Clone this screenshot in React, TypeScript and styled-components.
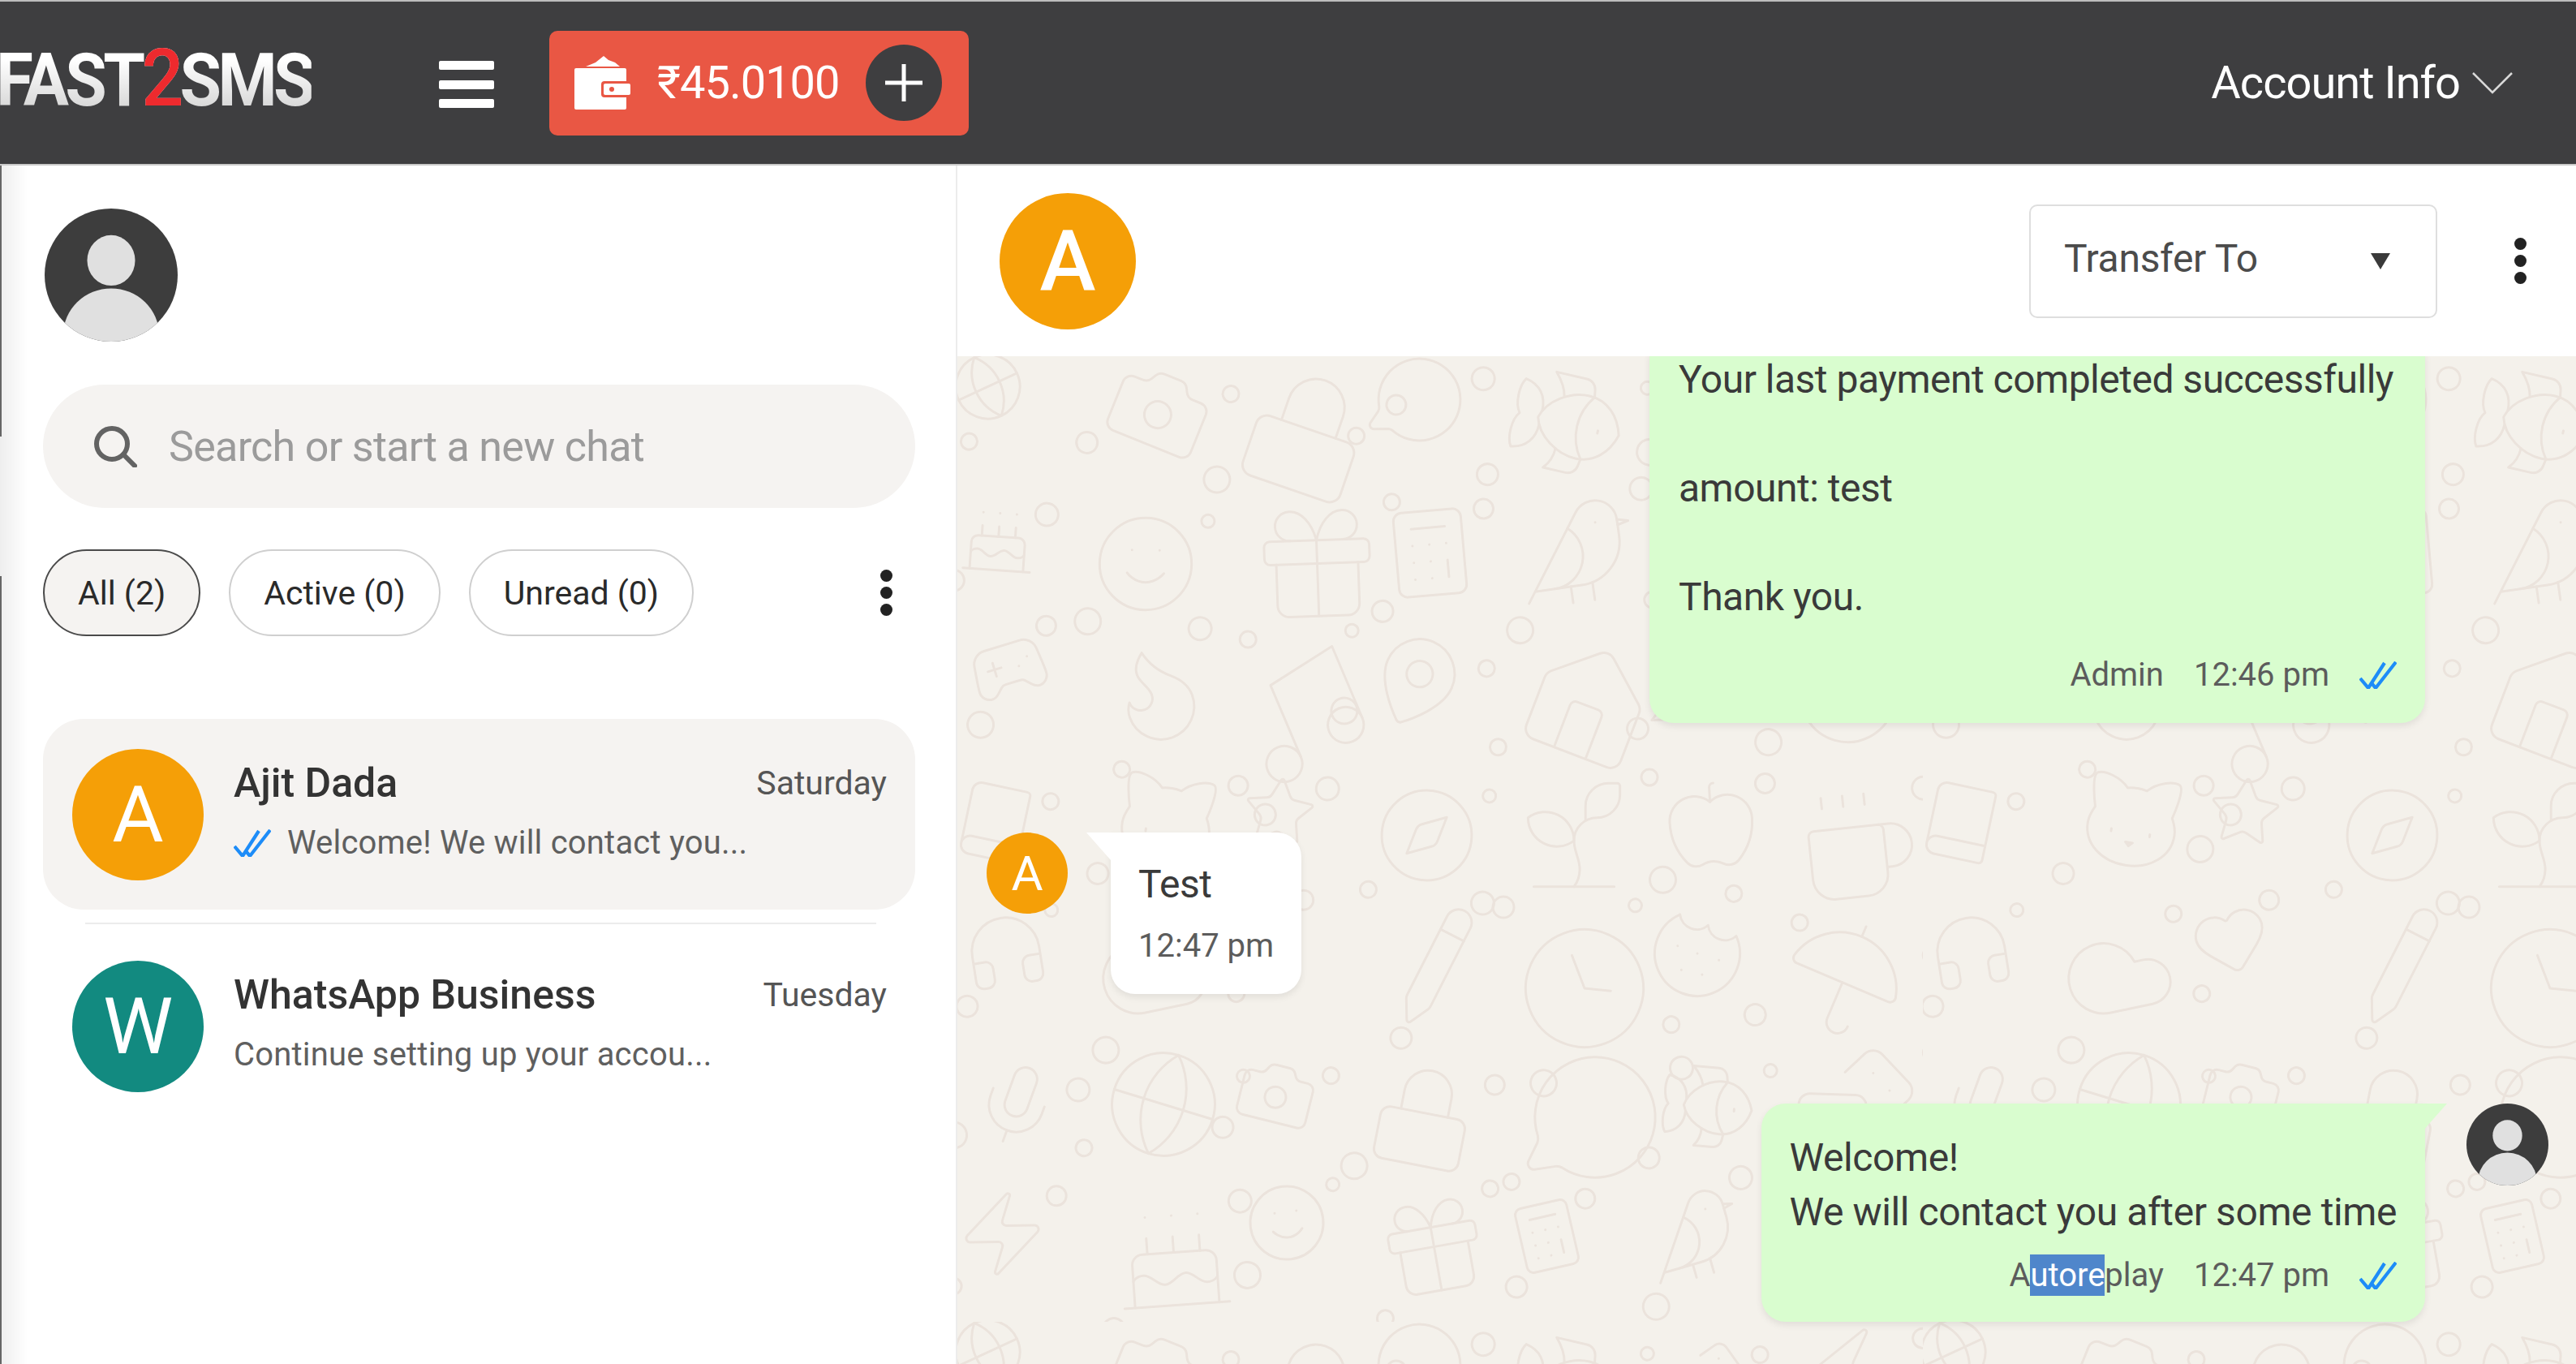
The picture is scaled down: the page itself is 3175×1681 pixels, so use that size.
import React from "react";
import styled, { createGlobalStyle } from "styled-components";
import {
  Apple, Bird, Book, Cake, Calculator, Camera, Carrot, Cat, Clock, Cloud, Coffee, Compass, Cookie,
  Dices, Fish, Flame, Gamepad2, Gift, Globe, Headphones, Heart, House, Lock, MapPin, MessageCircle,
  Mic, Moon, Music, Pencil, Puzzle, Smile, Sparkles, Sprout, Star, Umbrella, Zap,
} from "lucide-react";

const GlobalStyle = createGlobalStyle`
  html, body { margin: 0; padding: 0; background: #fff; }
  * { box-sizing: border-box; }
  body { font-family: Roboto, "Liberation Sans", sans-serif; color: #3c3c3c; }
`;

const Page = styled.div`
  width: 3175px;
  height: 1681px;
  display: flex;
  flex-direction: column;
  overflow: hidden;
`;

const TopBar = styled.header`
  height: 204px;
  flex: none;
  display: flex;
  align-items: center;
  background: #3e3e40;
  border-top: 2px solid #bdbdbd;
  border-bottom: 2px solid #c9c9c9;
  padding-right: 78px;
`;

const LogoSlot = styled.div`
  width: 541px;
  flex: none;
`;

const Logo = styled.div`
  display: inline-block;
  margin-left: -5px;
  margin-top: -12px;
  font-size: 90px;
  font-weight: 700;
  letter-spacing: -5px;
  transform: scaleX(0.93);
  transform-origin: left center;
  background: linear-gradient(#ffffff 30%, #d5d5d5 85%);
  -webkit-background-clip: text;
  background-clip: text;
  color: transparent;
  span { color: #ee2a2e; font-weight: 500; font-size: 98px; -webkit-text-fill-color: #ee2a2e; }
`;

const Burger = styled.div`
  width: 68px;
  height: 58px;
  margin-right: 68px;
  display: flex;
  flex-direction: column;
  justify-content: space-between;
  margin-top: 4px;
  i { display: block; height: 11px; border-radius: 2px; background: #fff; }
`;

const Wallet = styled.div`
  width: 517px;
  height: 129px;
  display: flex;
  align-items: center;
  padding: 0 33px 0 31px;
  border-radius: 10px;
  background: #e95744;
  color: #fff;
  font-size: 56px;
  svg { flex: none; }
`;

const Balance = styled.span`
  margin-left: 33px;
  flex: 1;
  letter-spacing: -1px;
`;

const PlusBtn = styled.div`
  width: 94px;
  height: 94px;
  border-radius: 50%;
  background: #3e3e40;
  display: flex;
  align-items: center;
  justify-content: center;
`;

const Account = styled.div`
  margin-left: auto;
  display: flex;
  align-items: center;
  gap: 15px;
  color: #fff;
  font-size: 56px;
  letter-spacing: -1px;
`;

const Body = styled.div`
  flex: 1;
  min-height: 0;
  display: flex;
`;

const Sidebar = styled.aside`
  width: 1180px;
  flex: none;
  padding: 53px 50px 0 53px;
  border-right: 2px solid #ececec;
  background:
    linear-gradient(#666 0, #666 334px, transparent 334px, transparent 506px, #666 506px) left top / 2px 100% no-repeat,
    linear-gradient(90deg, #eeeeee 0, #ffffff 34px);
`;

const Me = styled.div`
  margin-left: 2px;
  height: 166px;
`;

const Search = styled.div`
  margin-top: 51px;
  height: 152px;
  border-radius: 76px;
  background: #f5f3f1;
  display: flex;
  align-items: center;
  gap: 39px;
  padding-left: 62px;
  font-size: 52px;
  letter-spacing: -0.7px;
  color: #9b9b9b;
`;

const Filters = styled.div`
  margin-top: 51px;
  display: flex;
  align-items: center;
  gap: 35px;
  height: 107px;
`;

const Chip = styled.div<{ $active?: boolean }>`
  height: 107px;
  padding: 0 41px;
  border-radius: 54px;
  display: flex;
  align-items: center;
  font-size: 41px;
  color: #2a2a2a;
  background: ${(p) => (p.$active ? "#f5f3f1" : "#fff")};
  border: 2px solid ${(p) => (p.$active ? "#4a4a4a" : "#cfcfcf")};
`;

const Kebab = styled.div<{ $size: number }>`
  display: flex;
  flex-direction: column;
  gap: ${(p) => p.$size * 0.4}px;
  i {
    display: block;
    width: ${(p) => p.$size}px;
    height: ${(p) => p.$size}px;
    border-radius: 50%;
    background: #222;
  }
`;

const FilterKebab = styled(Kebab)`
  margin-left: auto;
  margin-right: 28px;
`;

const ChatList = styled.div`
  margin-top: 102px;
`;

const ChatItem = styled.div<{ $active?: boolean }>`
  height: 235px;
  padding: 0 35px 0 36px;
  border-radius: 50px;
  display: flex;
  align-items: center;
  gap: 37px;
  background: ${(p) => (p.$active ? "#f5f3f1" : "#fff")};
`;

const Divider = styled.div`
  height: 2px;
  margin: 16px 48px 8px 52px;
  background: #ececec;
`;

const Avatar = styled.div<{ $size: number; $bg: string }>`
  flex: none;
  width: ${(p) => p.$size}px;
  height: ${(p) => p.$size}px;
  border-radius: 50%;
  background: ${(p) => p.$bg};
  color: #fff;
  font-size: ${(p) => p.$size * 0.6}px;
  display: flex;
  align-items: center;
  justify-content: center;
`;

const HeaderAvatar = styled(Avatar)`
  font-size: 104px;
  font-weight: 500;
`;

const ChatBody = styled.div`
  flex: 1;
  min-width: 0;
  padding-bottom: 6px;
`;

const ChatTop = styled.div`
  display: flex;
  justify-content: space-between;
  align-items: center;
  margin-bottom: 21px;
`;

const ChatName = styled.div`
  font-size: 50px;
  font-weight: 500;
  color: #333;
  line-height: 56px;
`;

const ChatDay = styled.div`
  font-size: 41px;
  color: #555;
`;

const ChatPreview = styled.div`
  display: flex;
  align-items: center;
  gap: 20px;
  font-size: 40px;
  letter-spacing: 0.2px;
  line-height: 50px;
  color: #5f5f5f;
`;

const Conversation = styled.main`
  flex: 1;
  min-width: 0;
  display: flex;
  flex-direction: column;
`;

const ConvHeader = styled.div`
  height: 235px;
  flex: none;
  display: flex;
  align-items: center;
  padding: 0 61px 0 52px;
  background: #fff;
`;

const Transfer = styled.div`
  margin-left: auto;
  margin-right: 95px;
  width: 503px;
  height: 140px;
  padding: 0 56px 6px 41px;
  border: 2px solid #dedede;
  border-radius: 10px;
  display: flex;
  align-items: center;
  justify-content: space-between;
  font-size: 48px;
  letter-spacing: -0.3px;
  color: #4b4b4b;
  svg { margin-top: 6px; }
`;

const Messages = styled.div`
  flex: 1;
  min-height: 0;
  position: relative;
  overflow: hidden;
  background: #f4f1eb;
  display: flex;
  flex-direction: column;
  justify-content: flex-end;
  gap: 135px;
  padding-bottom: 52px;
`;

const Doodles = styled.svg`
  position: absolute;
  inset: 0;
  width: 100%;
  height: 100%;
`;

const Row = styled.div<{ $out?: boolean }>`
  position: relative;
  display: flex;
  align-items: flex-start;
  justify-content: ${(p) => (p.$out ? "flex-end" : "flex-start")};
  gap: 53px;
  padding: ${(p) => (p.$out ? "0 34px 0 0" : "0 0 0 36px")};
`;

const Bubble = styled.div<{ $out?: boolean; $clipped?: boolean }>`
  position: relative;
  padding: ${(p) => (p.$out ? "33px 35px 32px 34px" : "30px 34px 34px")};
  margin-right: ${(p) => (p.$out ? "152px" : "0")};
  background: ${(p) => (p.$out ? "#d9fdcf" : "#fff")};
  border-radius: ${(p) => (p.$clipped ? "0 0 30px 30px" : p.$out ? "30px 0 30px 30px" : "0 30px 30px 30px")};
  box-shadow: 0 4px 8px rgba(0, 0, 0, 0.08);
  font-size: 48px;
  letter-spacing: -0.4px;
  line-height: 67px;
  color: #3a3a3a;
  &::before {
    content: ${(p) => (p.$clipped ? "none" : '""')};
    position: absolute;
    top: 0;
    ${(p) => (p.$out ? "right: -27px;" : "left: -30px;")}
    width: 30px;
    height: 34px;
    background: inherit;
    clip-path: ${(p) => (p.$out ? "polygon(0 0, 100% 0, 0 100%)" : "polygon(0 0, 100% 0, 100% 100%)")};
  }
`;

const Meta = styled.div<{ $tight?: boolean }>`
  display: flex;
  align-items: center;
  justify-content: flex-end;
  gap: 37px;
  margin-top: ${(p) => (p.$tight ? 18 : 20)}px;
  font-size: 40px;
  letter-spacing: 0;
  line-height: 50px;
  color: #5c5c5c;
`;

const ClippedBubble = styled(Bubble)`
  padding: 0 35px 34px 36px;
  width: 956px;
  white-space: nowrap;
  letter-spacing: -0.5px;
  ${Meta} { margin-top: 38px; }
`;

const OutAvatar = styled.div`
  position: absolute;
  top: 0;
  right: 34px;
`;

const Picked = styled.span`
  background: #4f86cb;
  color: #fff;
  padding: 2px 0;
`;

const Person = ({ size }: { size: number }) => (
  <svg width={size} height={size} viewBox="0 0 100 100">
    <defs>
      <clipPath id={`c${size}`}>
        <circle cx="50" cy="50" r="50" />
      </clipPath>
    </defs>
    <g clipPath={`url(#c${size})`}>
      <rect width="100" height="100" fill="#3d3d3d" />
      <ellipse cx="50" cy="39" rx="18" ry="19" fill="#e0e0e0" />
      <ellipse cx="50" cy="95" rx="36" ry="35" fill="#e0e0e0" />
    </g>
  </svg>
);

const Ticks = ({ w = 46 }: { w?: number }) => (
  <svg width={w} height={w * 0.76} viewBox="0 0 46 35" fill="none" stroke="#1d8cf8" strokeWidth="4.2">
    <path d="M1 21 L11 33 L31 2" />
    <path d="M15 27 L20 33 L45 1" />
  </svg>
);

const doodleIcons = [
  Globe, Cloud, Cat, Flame, Smile, Camera, Heart, Star, Music, Gift, Lock, Pencil, Compass, MapPin, Calculator,
  MessageCircle, Clock, Sprout, House, Bird, Fish, Cookie, Apple, Carrot, Puzzle, Dices, Umbrella, Coffee, Moon,
  Sparkles, Zap, Mic, Headphones, Book, Gamepad2, Cake,
];

const TILE = 1190;
const CELL = 170;
const doodleCells = Array.from({ length: 49 }, (_, i) => i);

const Tile = () => (
  <>
    {doodleCells.map((i) => {
      const Icon = doodleIcons[(i * 5) % doodleIcons.length];
      const col = i % 7;
      const row = Math.floor(i / 7);
      const size = 95 + ((i * 37) % 85);
      const x = col * CELL + ((i * 53) % 30) - 10;
      const y = row * CELL + ((i * 71) % 30) - 10;
      return (
        <g key={i} transform={`rotate(${((i * 47) % 50) - 25} ${x + size / 2} ${y + size / 2})`}>
          <Icon x={x} y={y} width={size} height={size} color="#ebe3dc" strokeWidth={(3 * 24) / size} />
          <circle cx={x + size + 8} cy={y + 14} r={8 + (i % 4) * 2} fill="none" stroke="#ebe3dc" strokeWidth="3" />
          <circle cx={x - 2} cy={y + size + 4} r={10 + (i % 3) * 3} fill="none" stroke="#ebe3dc" strokeWidth="3" />
        </g>
      );
    })}
  </>
);

export default function App() {
  return (
    <Page>
      <GlobalStyle />
      <TopBar>
        <LogoSlot>
          <Logo>
            FAST<span>2</span>SMS
          </Logo>
        </LogoSlot>
        <Burger>
          <i />
          <i />
          <i />
        </Burger>
        <Wallet>
          <svg width="69" height="66" viewBox="0 0 69 66" fill="#fff">
            <path d="M14 13 L26 8 L36 0 L42 5 L50 8 L56 13 Z" />
            <rect x="0" y="15" width="64" height="51" rx="2" />
            <rect x="33" y="31" width="36" height="20" rx="4" fill="#e95744" />
            <rect x="36" y="34" width="33" height="14" rx="2" />
            <circle cx="46" cy="41" r="3" fill="#e95744" />
          </svg>
          <Balance>₹45.0100</Balance>
          <PlusBtn>
            <svg width="46" height="46" viewBox="0 0 46 46" stroke="#fff" strokeWidth="5">
              <path d="M23 0 V46 M0 23 H46" />
            </svg>
          </PlusBtn>
        </Wallet>
        <Account>
          Account Info
          <svg width="50" height="28" viewBox="0 0 50 28" fill="none" stroke="#d9d9d9" strokeWidth="2.5">
            <path d="M1 2 L25 26 L49 2" />
          </svg>
        </Account>
      </TopBar>
      <Body>
        <Sidebar>
          <Me>
            <Person size={164} />
          </Me>
          <Search>
            <svg width="54" height="52" viewBox="0 0 54 52" fill="none" stroke="#636363" strokeWidth="6">
              <circle cx="23" cy="23" r="19" />
              <path d="M37 36 L51 50" strokeLinecap="round" />
            </svg>
            Search or start a new chat
          </Search>
          <Filters>
            <Chip $active>All (2)</Chip>
            <Chip>Active (0)</Chip>
            <Chip>Unread (0)</Chip>
            <FilterKebab $size={15}>
              <i />
              <i />
              <i />
            </FilterKebab>
          </Filters>
          <ChatList>
            <ChatItem $active>
              <Avatar $size={162} $bg="#f59f07">A</Avatar>
              <ChatBody>
                <ChatTop>
                  <ChatName>Ajit Dada</ChatName>
                  <ChatDay>Saturday</ChatDay>
                </ChatTop>
                <ChatPreview>
                  <Ticks />
                  Welcome! We will contact you...
                </ChatPreview>
              </ChatBody>
            </ChatItem>
            <Divider />
            <ChatItem>
              <Avatar $size={162} $bg="#128a80">W</Avatar>
              <ChatBody>
                <ChatTop>
                  <ChatName>WhatsApp Business</ChatName>
                  <ChatDay>Tuesday</ChatDay>
                </ChatTop>
                <ChatPreview>Continue setting up your accou...</ChatPreview>
              </ChatBody>
            </ChatItem>
          </ChatList>
        </Sidebar>
        <Conversation>
          <ConvHeader>
            <HeaderAvatar $size={168} $bg="#f59f07">A</HeaderAvatar>
            <Transfer>
              Transfer To
              <svg width="24" height="20" viewBox="0 0 24 20" fill="#3a3a3a">
                <path d="M0 0 H24 L12 20 Z" />
              </svg>
            </Transfer>
            <Kebab $size={15}>
              <i />
              <i />
              <i />
            </Kebab>
          </ConvHeader>
          <Messages>
            <Doodles>
              <defs>
                <pattern id="doodle" width={TILE} height={TILE} patternUnits="userSpaceOnUse">
                  <Tile />
                </pattern>
              </defs>
              <rect width="100%" height="100%" fill="url(#doodle)" />
            </Doodles>
            <Row $out>
              <ClippedBubble $out $clipped>
                Your last payment completed successfully
                <br />
                <br />
                amount: test
                <br />
                <br />
                Thank you.
                <Meta>
                  <span>Admin</span>
                  <span>12:46 pm</span>
                  <Ticks />
                </Meta>
              </ClippedBubble>
            </Row>
            <Row>
              <Avatar $size={100} $bg="#f59f07">A</Avatar>
              <Bubble>
                Test
                <Meta $tight>12:47 pm</Meta>
              </Bubble>
            </Row>
            <Row $out>
              <Bubble $out>
                Welcome!
                <br />
                We will contact you after some time
                <Meta>
                  <span>
                    A<Picked>utore</Picked>play
                  </span>
                  <span>12:47 pm</span>
                  <Ticks />
                </Meta>
              </Bubble>
              <OutAvatar>
                <Person size={101} />
              </OutAvatar>
            </Row>
          </Messages>
        </Conversation>
      </Body>
    </Page>
  );
}
